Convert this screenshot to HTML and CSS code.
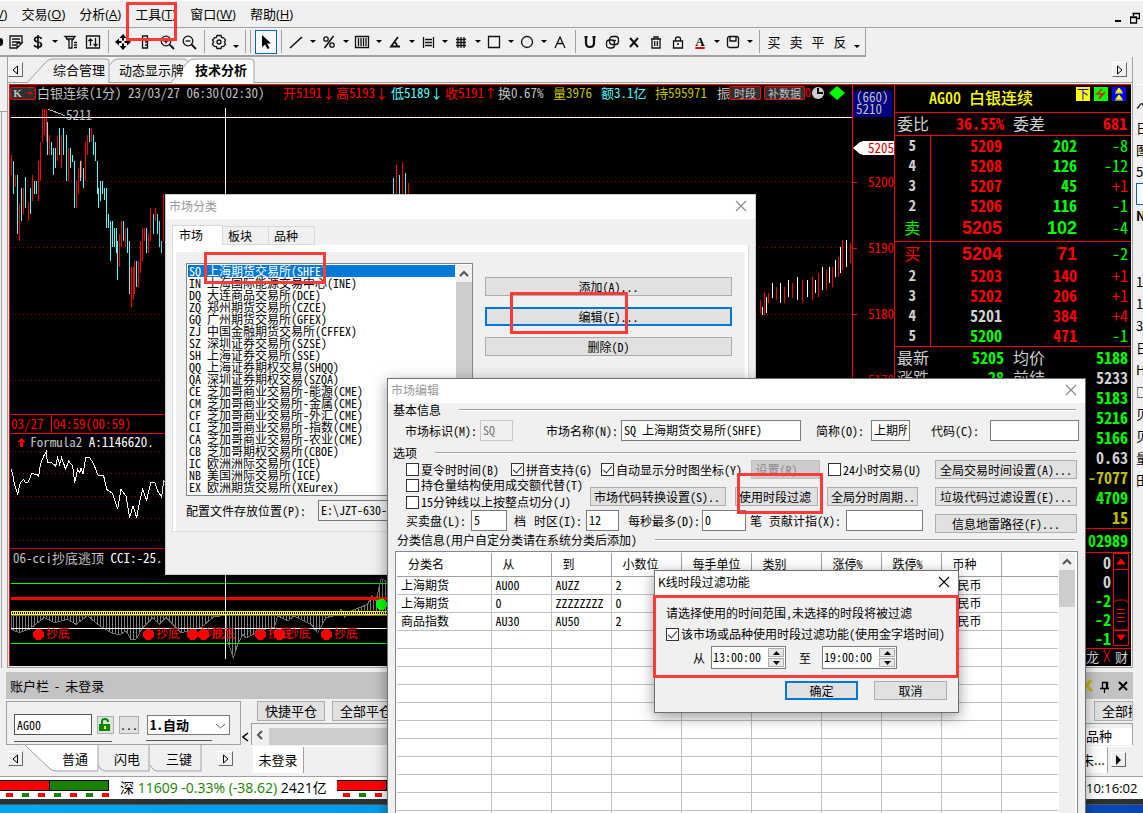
FILE: index.html
```html
<!DOCTYPE html>
<html lang="zh-CN">
<head>
<meta charset="utf-8">
<title>技术分析 - 白银连续</title>
<link rel="stylesheet" href="styles.css">
</head>
<body>
<div class="desktop">
  <nav class="menubar">
    <button class="menu menu-cut">(<u>V</u>)</button>
    <button class="menu">交易(<u>O</u>)</button>
    <button class="menu">分析(<u>A</u>)</button>
    <button class="menu menu-tools">工具(<u>T</u>)</button>
    <button class="menu">窗口(<u>W</u>)</button>
    <button class="menu">帮助(<u>H</u>)</button>
    <div class="mdi">
      <button class="mdi-btn" aria-label="最小化"><svg width="10" height="12"><path d="M1 9h6" stroke="#000" stroke-width="2"/></svg></button>
      <button class="mdi-btn" aria-label="还原"><svg width="10" height="12"><path d="M3.500 4V1.500h6v5H7M2.500 1.500h7M.5 5h6v6h-6zM.5 5.500h6" fill="none" stroke="#000" stroke-width="1.300"/></svg></button>
    </div>
  </nav>

  <div class="toolbar">
    <span class="stub"></span>
    <button class="tool" aria-label="文档"><svg viewBox="0 0 16 16"><path d="M14 9V2H2v12h7M4 5h8M4 8h8M4 11h4M9 14l5-5H9z"/></svg></button>
    <button class="tool" aria-label="资金"><svg viewBox="0 0 16 16"><path stroke-width="1.700" d="M11.500 5Q11 3 8 3T4.600 5.300Q4.800 7.500 8 8t3.500 2.600Q11.300 13 8 13T4.300 11M8 1v14"/></svg></button><i class="caret"></i>
    <button class="tool" aria-label="筛选"><svg viewBox="0 0 16 16"><path d="M2 2.500h10L9 6.500V14H6V6.500zM3 5h8M11 8.500h3M11 11h3M11 13.500h3"/></svg></button>
    <button class="tool" aria-label="升降"><svg viewBox="0 0 16 16"><path d="M1.500 2h13v12h-13zM5.500 12V5M3.500 7l2-2 2 2M10.500 4v8M8.500 10l2 2 2-2"/></svg></button>
    <i class="sep"></i>
    <button class="tool" aria-label="移动"><svg viewBox="0 0 16 16"><path fill="#000" stroke="none" d="M8 0l3.500 4H9v2.500H7V4H4.500zM8 16l3.500-4H9V9.500H7V12H4.500zM0 8l4-3.500V7h2.500v2H4v2.500zM16 8l-4-3.500V7H9.500v2H12v2.500z"/></svg></button>
    <button class="tool" aria-label="测量"><svg viewBox="0 0 16 16"><path d="M5.500 2h5v12h-5zM8 5h2M8 8h2M8 11h2"/></svg></button>
    <button class="tool" aria-label="放大"><svg viewBox="0 0 16 16"><circle cx="7" cy="7" r="4.800"/><path d="M10.500 10.500L15 15" stroke-width="1.800"/><path d="M4.500 7h5M7 4.500v5"/></svg></button>
    <button class="tool" aria-label="缩小"><svg viewBox="0 0 16 16"><circle cx="7" cy="7" r="4.800"/><path d="M10.500 10.500L15 15" stroke-width="1.800"/><path d="M4.500 7h5"/></svg></button>
    <i class="sep"></i>
    <button class="tool" aria-label="设置"><svg viewBox="0 0 16 16"><path d="M6 1.500h4l.6 2 2 .4 1.900 2.100-1 2 1 2.100-1.900 2.200-2 .3L10 14.500H6l-.6-1.900-2-.3-1.900-2.200 1-2.100-1-2 1.900-2.100 2-.4z"/><circle cx="8" cy="8" r="2"/></svg></button><i class="caret low"></i>
    <i class="grip"></i>
    <button class="tool on" aria-label="选择"><svg viewBox="0 0 16 16"><path fill="#000" stroke="none" d="M4 1v12l3-2.500L9.500 15l2-1L9 9.500h4z"/></svg></button>
    <i class="sep"></i>
    <button class="tool" aria-label="直线"><svg viewBox="0 0 16 16"><path stroke-width="1.600" d="M2 14L14 3"/></svg></button><i class="caret"></i>
    <button class="tool" aria-label="百分比"><svg viewBox="0 0 16 16"><circle cx="5" cy="5" r="2.200"/><circle cx="11" cy="11" r="2.200"/><path stroke-width="1.600" d="M3.500 14l9-12"/></svg></button><i class="caret"></i>
    <button class="tool" aria-label="周期线"><svg viewBox="0 0 16 16"><path d="M1.500 2.500h13v11h-13zM4.500 4v8M7 4v8M9.500 4v8M12 4v8"/></svg></button><i class="caret"></i>
    <button class="tool" aria-label="角度"><svg viewBox="0 0 16 16"><path stroke-width="1.800" d="M11 3L4 12.500h9M7 8q3 1 3 5"/></svg></button><i class="caret"></i>
    <button class="tool" aria-label="刻度"><svg viewBox="0 0 16 16"><path d="M3.500 3v11M13.500 3v11M5 5.500h7M5 8.500h7M5 11.500h7"/></svg></button><i class="caret"></i>
    <button class="tool" aria-label="网格"><svg viewBox="0 0 16 16"><path d="M5 3v11M8 3v11M11 3v11M3 5.500h10M3 8.500h10M3 11.500h10"/></svg></button><i class="caret"></i>
    <button class="tool" aria-label="矩形"><svg viewBox="0 0 16 16"><path d="M2.500 2.500h11v11h-11z"/></svg></button><i class="caret"></i>
    <button class="tool" aria-label="圆"><svg viewBox="0 0 16 16"><circle cx="8" cy="8" r="5.500"/></svg></button><i class="caret"></i>
    <button class="tool" aria-label="文字"><svg viewBox="0 0 16 16"><path d="M3 14L8 3l5 11M5 9.500h6"/></svg></button>
    <i class="sep"></i>
    <button class="tool" aria-label="磁吸"><svg viewBox="0 0 16 16"><path stroke-width="2.200" d="M4 3v6q0 4 4 4t4-4V3M2.500 3h3M10.500 3h3"/></svg></button>
    <button class="tool" aria-label="复制"><svg viewBox="0 0 16 16"><rect x="5.500" y="2.500" width="9" height="8" rx="3"/><rect x="2.500" y="6" width="8" height="8" rx="3"/><path d="M8 6.500h4"/></svg></button>
    <button class="tool" aria-label="删除"><svg viewBox="0 0 16 16"><path stroke-width="2" d="M4 4l8 9M12 4l-8 9"/></svg></button>
    <button class="tool" aria-label="清空"><svg viewBox="0 0 16 16"><path d="M3 5h10M6 5V3h4v2M4 5v9h8V5M6.700 7v5M9.300 7v5"/></svg></button>
    <button class="tool" aria-label="锁定"><svg viewBox="0 0 16 16"><path d="M3.500 7h9v7h-9zM5.500 7V5q0-2 2.500-2t2.500 2v2M7 10h2"/></svg></button>
    <button class="tool tool-a" aria-label="字体颜色">A</button><i class="caret"></i>
    <button class="tool" aria-label="保存"><svg viewBox="0 0 16 16"><rect x="2.500" y="2.500" width="11" height="11" rx="2"/><path d="M5 3v4h6V3"/></svg></button><i class="caret"></i>
    <i class="sep"></i>
    <button class="tool">买</button><button class="tool">卖</button><button class="tool">平</button><button class="tool">反</button><i class="caret low"></i>
  </div>

  <div class="work">
    <div class="gutter"></div>
    <main class="frame">
      <div class="strip">
        <svg class="strip-bg" width="260" height="26" fill="#f0f0f0" stroke="#a0a0a0"><path d="M19 26L36 7q4-5 8-5h54q3 0 3 3v21M102 8q3-6 8-6h64q6 0 7 5"/><path fill="#fff" d="M163 26l15-19q4-5 8-5h57q3 0 3 3v21"/></svg>
        <button class="arrow" aria-label="向左"><svg width="7" height="10"><path d="M5.500 1v8L1 5z" fill="none" stroke="#000"/></svg></button>
        <button class="tab t1">综合管理</button><button class="tab t2">动态显示牌</button><button class="tab t3">技术分析</button>
        <button class="arrow end" aria-label="向右"><svg width="7" height="10"><path d="M1.500 1v8L6 5z" fill="none" stroke="#000"/></svg></button>
      </div>
      <div class="terminal">
        <section class="charts">
          <header class="ticker">
            <button class="kbtn"><b>K</b><i></i></button>
            <span>白银连续(1分) 23/03/27 06:30(02:30)</span>
            <span class="r">开5191↓</span><span class="r">高5193↓</span><span class="c">低5189↓</span><span class="r">收5191↑</span>
            <span>换0.67%</span><span class="y">量3976</span><span class="c">额3.1亿</span><span class="y">持595971</span><span>振</span>
            <button class="pill">时段</button><button class="pill wide">补数据</button>
            <svg width="44" height="16"><text x="0" y="12" fill="red" font-size="12">0</text><circle cx="13" cy="8" r="6" fill="#d0d0d0"/><path d="M13 3v5h5" stroke="#000" fill="none" stroke-width="2"/><path d="M24 8l8-7 8 7-8 7z" fill="#0f0"/></svg>
          </header>
          <svg class="plot" viewBox="27 42 2529 930" width="843" height="310" fill="none" stroke-width="3">
            <path stroke="#a00000" stroke-dasharray="3 9" d="M30 76.500H2556M30 274.500H2556M30 472.500H2556M30 673.500H2556M30 871.500H2556"/>
            <path stroke="#f00" d="M31 195V255M44 255V290M55 338V453M68 294V372M82 335V392M95 255V332M113 213V333M119 156V273M125 57V156M131 57V135M137 57V156M146 135V195M170 135V213M182 135V235M203 174V273M227 273V353M233 234V312M242 213V265M254 156V273M260 135V195M272 115V156M356 432V530M362 392V470M374 413V470M392 530V650M398 530V630M401 513V612M413 513V590M419 453V550M425 413V513M431 413V453M443 432V490M449 353V453M464 353V392M488 312V453M1185 225V320M1203 215V320M1221 280V320M2277 630V670M2289 610V675M2301 610V640M2325 590V630M2349 590V640M2373 580V625M2403 570V640M2433 560V630M2451 550V620M2475 540V600M2493 530V590M2511 500V560M2523 450V540M2547 460V520"/>
            <path stroke="#54fcfc" d="M38 213V312M49 255V432M62 294V392M74 262V355M89 294V372M101 273V312M107 273V312M139 96V195M152 156V195M158 174V255M164 174V235M176 115V195M188 115V195M197 135V273M209 174V235M215 195V215M221 213V353M239 213V273M248 234V294M266 115V156M278 135V195M284 156V213M290 213V312M293 294V353M299 273V332M305 273V312M311 294V330M317 294V413M323 372V413M329 392V513M335 392V470M341 413V470M347 413V490M350 453V570M368 392V453M380 413V490M386 453V612M407 513V590M437 413V490M458 372V432M470 372V432M476 392V470M482 453V490M1176 265V320M1194 255V320M1212 250V320"/>
            <path stroke="#fff" d="M2283 650V675M2295 620V670M2313 580V625M2337 580V640M2361 570V620M2388 560V630M2418 570V620M2442 570V610M2463 530V600M2484 530V580M2502 510V560M2517 470V550M2535 450V530"/>
            <path stroke="#fff" d="M30 82.500H2556M673.500 54V972"/>
            <path stroke="#bbb" d="M140 57L192 77"/>
            <text x="195" y="90" class="lbl" fill="#c0c0c0">5211</text>
          </svg>
          <div class="times"><span>03/27</span><span>04:59(00:59)</span></div>
          <svg class="plot" viewBox="27 69 2529 345" width="843" height="115" fill="none" stroke-width="3">
            <path stroke="#a00000" stroke-dasharray="3 9" d="M30 121.500H2556M30 187.500H2556M30 256.500H2556M30 322.500H2556M30 388.500H2556"/>
            <path fill="#f00" d="M50 93l12-12 12 12h-8v15h-8V93z"/>
            <text x="88" y="108" class="lbl" fill="#c0c0c0">Formula2 <tspan fill="#fff">A:1146620.</tspan></text>
            <path stroke="#fff" d="M30 175L35 190 40 220 50 250 58 215 68 205 73 215 82 213 92 188 108 190 113 195 118 160 128 135 136 122 139 153 152 155 164 165 170 140 176 160 182 140 194 175 203 150 215 165 221 215 230 175 236 185 240 172 246 188 254 140 266 140 278 158 290 192 308 195 317 235 335 248 350 295 360 235 375 255 386 320 396 285 407 320 413 285 425 235 437 268 449 215 462 215 470 240 482 258 488 210 495 215"/>
            <path stroke="#d00" d="M27 412.500H2556"/>
          </svg>
          <svg class="plot" viewBox="27 414 2529 351" width="843" height="117" fill="none" stroke-width="3">
            <defs><pattern id="bars" width="9" height="9" patternUnits="userSpaceOnUse"><path d="M0 0h3v9H0z" fill="#808080"/></pattern></defs>
            <text x="36" y="456" class="lbl" fill="#c0c0c0">06-cci抄底逃顶 <tspan fill="#fff">CCI:-25.</tspan></text>
            <path fill="url(#bars)" stroke="#707070" d="M30 612V655L55 665 85 655 110 635 130 620 160 635 200 625 225 640 260 614 290 640 330 665 355 672 375 660 390 685 405 685 425 650 455 620 475 640 495 620 540 665 600 650 640 616 675 614 680 690 697 742 710 700 725 670 735 680 790 655 820 650 830 614 860 630 880 615 930 640 950 665 975 620 1010 612 1020 595 1030 618 1050 600 1100 580 1112 555 1125 570 1140 503 1165 515V612z"/>
            <g fill="#0f0"><rect x="30" y="516" width="2526" height="3"/><rect x="30" y="696" width="2526" height="3"/></g>
            <path stroke="#f00" stroke-width="9" d="M30 562.500H2556"/>
            <path stroke="#ff0" stroke-width="12" d="M30 606H2556"/><path stroke="#000" stroke-width="6" stroke-dasharray="3 3" d="M33 606H2556"/>
            <path stroke="#fff" d="M30 652.500H2556M673.500 480V745"/>
            <g fill="#f00"><circle cx="113" cy="670" r="17"/><circle cx="443" cy="670" r="17"/><circle cx="575" cy="670" r="17"/><circle cx="608" cy="670" r="17"/><circle cx="778" cy="670" r="17"/><circle cx="835" cy="670" r="17"/><circle cx="977" cy="670" r="17"/>
            <g class="mark"><text x="135" y="682">抄底</text><text x="465" y="682">抄底</text><text x="597" y="682">抄底</text><text x="630" y="682">抄底</text><text x="800" y="682">抄底</text><text x="857" y="682">抄底</text><text x="999" y="682">抄底</text></g></g>
            <circle cx="1141" cy="580" r="17" fill="#0f0"/>
          </svg>
        </section>
        <aside class="axis">
          <div class="cursor"><span>(660)</span><span>5210</span></div>
          <div class="now"><svg width="10" height="14"><path d="M0 7l7-6 3-1v14l-3-1z" fill="#fff"/></svg><b>5205</b></div>
          <div class="ticks"><span>5200</span><span>5190</span><span>5180</span><span>5170</span></div>
        </aside>
        <aside class="quote">
          <div class="q-head"><b>AG00 白银连续</b><span class="badges"><i class="bd by">下</i><i class="bd bg"><svg width="12" height="12"><path d="M7 1L2 6h5l-3 5M10 4L5 10" fill="none" stroke="#d02000" stroke-width="1.500"/></svg></i><i class="bd bb"><svg width="12" height="14"><path d="M6 1l3 4H3zM2 6h8M6 8l3 4H3zM2 13h8" fill="#ff0" stroke="#ff0"/></svg></i></span></div>
          <div class="q-ratio"><span>委比</span><b>36.55%</b><span>委差</span><b>681</b></div>
          <table class="depth">
            <tr><th>5</th><td class="r">5209</td><td class="g">202</td><td class="g">-8</td></tr>
            <tr><th>4</th><td class="r">5208</td><td class="g">126</td><td class="g">-12</td></tr>
            <tr><th>3</th><td class="r">5207</td><td class="g">45</td><td class="r">+1</td></tr>
            <tr><th>2</th><td class="r">5206</td><td class="g">116</td><td class="g">-1</td></tr>
            <tr class="best"><th class="g">卖</th><td class="r">5205</td><td class="g">102</td><td class="g">-4</td></tr>
            <tr class="best buy"><th class="r">买</th><td class="r">5204</td><td class="r">71</td><td class="g">-2</td></tr>
            <tr><th>2</th><td class="r">5203</td><td class="r">140</td><td class="r">+1</td></tr>
            <tr><th>3</th><td class="r">5202</td><td class="r">206</td><td class="r">+1</td></tr>
            <tr><th>4</th><td>5201</td><td class="r">384</td><td class="r">+4</td></tr>
            <tr><th>5</th><td class="g">5200</td><td class="r">471</td><td class="g">-1</td></tr>
          </table>
          <div class="stats">
            <span>最新</span><b class="g">5205</b><span>均价</span><b class="g">5188</b>
            <span>涨跌</span><b class="g">28</b><span>前结</span><b>5233</b>
            <b class="last g">5183</b><b class="last g">5216</b><b class="last g">5166</b><b class="last">0.63</b><b class="last y">-7077</b><b class="last g">4709</b><b class="last y">15</b>
          </div>
          <div class="total g"><b>02989</b></div>
          <div class="mini">
            <div class="mini-n"><b>0</b><b>0</b><b class="g">-2</b><b class="g">-2</b><b class="g">-1</b></div>
            <svg width="17" height="93" fill="none" stroke="#f00"><path d="M.5.5h15v92H.5zM.5 16.500h15M.5 77.500h15M.5 52q0-5 5-5h5q5 0 5 5v20q0 5-5 5h-5q-5 0-5-5zM4 56.500h8M4 60.500h8M4 64.500h8M4 68.500h8"/><path fill="#f00" d="M8 6l4 5H4zM8 87l4-5H4z"/></svg>
          </div>
          <div class="q-tabs"><span>龙</span><svg width="8" height="14"><path d="M1 1l6 12M7 1L1 13" stroke="#f00"/></svg><span>财</span></div>
        </aside>
      </div>
    </main>
    <div class="rail"><span>へ</span><span>日</span><span>图</span><span>5</span><i></i><b>N</b><span class="skip">1</span><span>1</span><span>3</span><span>日</span><span>H</span><span>□</span><span>贝</span><span>贝</span><span>量</span><span>田</span></div>
  </div>

  <div class="account"><span>账户栏 &nbsp;- &nbsp;未登录</span>
    <svg width="52" height="14" fill="none" stroke="#000"><path stroke="#c8b400" stroke-width="3" d="M1 3l10 9M10 1L1 12"/><path stroke-width="1.300" d="M19 9.500h9M21.500 9V3.500h5V9M25.500 3v6M23.500 10v4"/><path stroke-width="2" d="M38 3l8 8M46 3l-8 8"/></svg>
  </div>

  <div class="trade">
    <div class="order">
      <div class="order-box">
        <input class="code" aria-label="合约" value="AG00">
        <button class="sq" aria-label="锁"><svg width="12" height="14"><path d="M3 7V3q0-2 3-2t3 3" fill="none" stroke="#080" stroke-width="2"/><path d="M0 6h11v7H0z" fill="#080"/><path d="M5 8h2v3H5z" fill="#ff0"/></svg></button>
        <button class="sq dots">...</button>
        <span class="pick"><select class="auto" aria-label="方式"><option>1.自动</option></select><svg width="9" height="6"><path d="M0 1l4.500 4L9 1" fill="none" stroke="#555"/></svg></span>
      </div>
      <div class="order-tabs">
        <svg class="ot-bg" width="200" height="27" fill="#f0f0f0" stroke="#a0a0a0"><path fill="#fff" d="M19 0l24 23q3 3 7 3h41q1 0 1-1V0"/><path d="M92 20q3 6 7 6h44V0M144 20q3 6 7 6h44V0"/></svg>
        <button class="arrow" aria-label="向左"><svg width="7" height="10"><path d="M5.500 1v8L1 5z" fill="none" stroke="#000"/></svg></button>
        <button class="tab">普通</button><button class="tab">闪电</button><button class="tab">三键</button>
        <button class="arrow" aria-label="向右"><svg width="7" height="10"><path d="M1.500 1v8L6 5z" fill="none" stroke="#000"/></svg></button>
      </div>
    </div>
    <span class="fold"><svg width="7" height="10"><path d="M6 1L1 5l5 4" fill="none" stroke="#000" stroke-width="1.500"/></svg></span>
    <div class="positions">
      <div class="acts"><button>快捷平仓</button><button>全部平仓</button><button class="far">全部撤单</button></div>
      <div class="hscroll"><svg width="17" height="14"><path d="M10 3L6 7l4 4" fill="none" stroke="#555" stroke-width="2"/></svg><i></i><span>品种</span></div>
      <div class="pos-tabs"><button class="pos-on">未登录</button><button class="pos-on more">未...</button><button class="arrow" aria-label="更多"><svg width="7" height="10"><path d="M1 0v10L6 5z"/></svg></button></div>
    </div>
  </div>

  <footer class="status">
    <div class="meter"><div class="bar"><i></i><i class="up"></i></div><div class="ticks2"></div></div>
    <span class="idx">深 <em>11609 -0.33% (-38.62)</em> 2421亿</span>
    <div class="meter m2"><div class="bar"><i></i></div><div class="ticks3"></div></div>
    <time>10:16:02</time>
  </footer>
  <div class="edge"></div>
  <div class="wall"></div>

  <i class="note n-tools"></i>

  <section class="win w-class">
    <header><h2>市场分类</h2><button class="close" aria-label="关闭"><svg width="12" height="12"><path d="M1 1l10 10M11 1L1 11"/></svg></button></header>
    <div class="wtabs"><button class="cur">市场</button><button>板块</button><button>品种</button></div>
    <div class="sheet"><div class="sheet-in">
      <div class="pair">
        <div class="listbox">
          <ul role="listbox" aria-label="市场">
            <li role="option" class="sel">SQ 上海期货交易所(SHFE)</li><li role="option">IN 上海国际能源交易中心(INE)</li><li role="option">DQ 大连商品交易所(DCE)</li><li role="option">ZQ 郑州期货交易所(CZCE)</li><li role="option">GQ 广州期货交易所(GFEX)</li><li role="option">ZJ 中国金融期货交易所(CFFEX)</li><li role="option">SZ 深圳证券交易所(SZSE)</li><li role="option">SH 上海证券交易所(SSE)</li><li role="option">QQ 上海证券期权交易(SHQQ)</li><li role="option">QA 深圳证券期权交易(SZQA)</li><li role="option">CE 芝加哥商业交易所-能源(CME)</li><li role="option">CM 芝加哥商业交易所-金属(CME)</li><li role="option">CF 芝加哥商业交易所-外汇(CME)</li><li role="option">CI 芝加哥商业交易所-指数(CME)</li><li role="option">CA 芝加哥商业交易所-农业(CME)</li><li role="option">CB 芝加哥期权交易所(CBOE)</li><li role="option">IC 欧洲洲际交易所(ICE)</li><li role="option">NB 美国洲际交易所(ICE)</li><li role="option">EX 欧洲期货交易所(XEurex)</li>
          </ul>
          <div class="vscroll"><svg width="16" height="17"><path d="M4 11l4-4 4 4"/></svg><i class="full"></i></div>
        </div>
        <div class="cmds"><button class="btn">添加(A)...</button><button class="btn focus">编辑(E)...</button><button class="btn">删除(D)</button></div>
      </div>
      <div class="path"><label for="cfg">配置文件存放位置(P):</label><input id="cfg" class="box" readonly value="E:\JZT-630-"></div>
    </div></div>
    <i class="note n-shfe"></i><i class="note n-edit"></i>
  </section>

  <section class="win w-edit">
    <header><h2>市场编辑</h2><button class="close" aria-label="关闭"><svg width="12" height="12"><path d="M1 1l10 10M11 1L1 11"/></svg></button></header>
    <div class="legend"><span>基本信息</span><i></i></div>
    <div class="base">
      <label for="f1">市场标识(M):</label><input id="f1" class="box" disabled value="SQ">
      <label for="f2">市场名称(N):</label><input id="f2" class="box" value="SQ 上海期货交易所(SHFE)">
      <label for="f3">简称(O):</label><input id="f3" class="box" value="上期所">
      <label for="f4">代码(C):</label><input id="f4" class="box">
    </div>
    <div class="legend"><span>选项</span><i></i></div>
    <div class="opts">
      <div class="opts-l">
        <div class="o-row flags">
          <label class="cb"><input type="checkbox">夏令时时间(B)</label><label class="cb"><input type="checkbox" checked>拼音支持(G)</label><label class="cb"><input type="checkbox" checked>自动显示分时图坐标(Y)</label><button class="btn" disabled>设置(R)...</button><label class="cb"><input type="checkbox">24小时交易(U)</label>
        </div>
        <div class="o-row tools">
          <div class="two"><label class="cb"><input type="checkbox">持仓量结构使用成交额代替(T)</label><label class="cb"><input type="checkbox">15分钟线以上按整点切分(J)</label></div>
          <button class="btn">市场代码转换设置(S)..</button><button class="btn">使用时段过滤</button><button class="btn">全局分时周期..</button>
        </div>
        <div class="o-row nums">
          <label for="g1">买卖盘(L):</label><input id="g1" class="box" value="5"><span>档</span>
          <label for="g2">时区(I):</label><input id="g2" class="box" value="12">
          <label for="g3">每秒最多(D):</label><input id="g3" class="box" value="0"><span>笔</span>
          <label for="g4">贡献计指(X):</label><input id="g4" class="box">
        </div>
      </div>
      <div class="opts-r"><button class="btn">全局交易时间设置(A)...</button><button class="btn">垃圾代码过滤设置(E)...</button><button class="btn">信息地雷路径(F)...</button></div>
    </div>
    <div class="legend cat"><span>分类信息(用户自定分类请在系统分类后添加)</span><i></i></div>
    <div class="gridbox">
      <table class="cats">
        <colgroup><col class="k95"><col class="k60"><col class="k60"><col class="k70"><col class="k70"><col class="k70"><col class="k60"><col class="k60"><col class="k60"><col></colgroup>
        <thead><tr><th>分类名</th><th>从</th><th>到</th><th>小数位</th><th>每手单位</th><th>类别</th><th>涨停%</th><th>跌停%</th><th>币种</th><th></th></tr></thead>
        <tbody>
          <tr><td>上海期货</td><td>AU00</td><td>AUZZ</td><td>2</td><td></td><td></td><td></td><td></td><td>人民币</td><td></td></tr>
          <tr><td>上海期货</td><td>0</td><td>ZZZZZZZZ</td><td>0</td><td></td><td></td><td></td><td></td><td>人民币</td><td></td></tr>
          <tr><td>商品指数</td><td>AU30</td><td>AU50</td><td>2</td><td></td><td></td><td></td><td></td><td>人民币</td><td></td></tr>
          <tr><td></td><td></td><td></td><td></td><td></td><td></td><td></td><td></td><td></td><td></td></tr>
          <tr><td></td><td></td><td></td><td></td><td></td><td></td><td></td><td></td><td></td><td></td></tr>
          <tr><td></td><td></td><td></td><td></td><td></td><td></td><td></td><td></td><td></td><td></td></tr>
          <tr><td></td><td></td><td></td><td></td><td></td><td></td><td></td><td></td><td></td><td></td></tr>
          <tr><td></td><td></td><td></td><td></td><td></td><td></td><td></td><td></td><td></td><td></td></tr>
          <tr><td></td><td></td><td></td><td></td><td></td><td></td><td></td><td></td><td></td><td></td></tr>
          <tr><td></td><td></td><td></td><td></td><td></td><td></td><td></td><td></td><td></td><td></td></tr>
          <tr><td></td><td></td><td></td><td></td><td></td><td></td><td></td><td></td><td></td><td></td></tr>
          <tr><td></td><td></td><td></td><td></td><td></td><td></td><td></td><td></td><td></td><td></td></tr>
          <tr><td></td><td></td><td></td><td></td><td></td><td></td><td></td><td></td><td></td><td></td></tr>
          <tr><td></td><td></td><td></td><td></td><td></td><td></td><td></td><td></td><td></td><td></td></tr>
        </tbody>
      </table>
      <div class="vscroll"><svg width="16" height="17"><path d="M4 11l4-4 4 4"/></svg><i></i></div>
    </div>
    <i class="note n-filter"></i>
  </section>

  <section class="win w-time">
    <header><h2>K线时段过滤功能</h2><button class="close" aria-label="关闭"><svg width="12" height="12"><path d="M1 1l10 10M11 1L1 11"/></svg></button></header>
    <p>请选择使用的时间范围,未选择的时段将被过滤</p>
    <label class="cb"><input type="checkbox" checked>该市场或品种使用时段过滤功能(使用金字塔时间)</label>
    <div class="range">
      <label for="t1">从</label><span class="spin"><input id="t1" value="13:00:00"><span class="ud"><button aria-label="增加"><svg width="7" height="4"><path d="M0 4l3.500-4L7 4z"/></svg></button><button aria-label="减少"><svg width="7" height="4"><path d="M0 0l3.500 4L7 0z"/></svg></button></span></span>
      <label for="t2">至</label><span class="spin"><input id="t2" value="19:00:00"><span class="ud"><button aria-label="增加"><svg width="7" height="4"><path d="M0 4l3.500-4L7 4z"/></svg></button><button aria-label="减少"><svg width="7" height="4"><path d="M0 0l3.500 4L7 0z"/></svg></button></span></span>
    </div>
    <div class="ok"><button class="btn focus">确定</button><button class="btn">取消</button></div>
    <i class="note n-range"></i>
  </section>
</div>
</body>
</html>
```

FILE: styles.css
```css
* { box-sizing: border-box; }
body { margin: 0; font: 13px/16px "Noto Sans CJK SC", sans-serif; color: #000; }
button, input, select { font: inherit; color: inherit; margin: 0; padding: 0; border: 0; background: none; border-radius: 0; outline: 0; }
button { white-space: nowrap; }
svg { display: block; flex: none; }
i { font-style: normal; }
.desktop { position: relative; height: 100vh; overflow: hidden; display: flex; flex-direction: column; background: #f0f0f0; }
.r { color: #f00; } .g { color: #0f0; } .y { color: #c0c000; } .c { color: #54fcfc; }

/* menu and toolbar */
.menubar { display: flex; align-items: center; height: 28px; flex: none; border-top: 1px solid #fff; border-bottom: 1px solid #a0a0a0; gap: 14px; overflow: hidden; }
.menu { font-family: "Open Sans", "Noto Sans CJK SC", sans-serif; font-size: 13px; }
.menu-cut { margin-left: -8px; }
.menu-tools { width: 41px; overflow: hidden; text-align: left; }
.mdi { margin-left: auto; display: flex; gap: 6px; padding: 8px 3px 0 0; }
.toolbar { display: flex; align-items: center; height: 29px; flex: none; width: 866px; border-right: 1px solid #a0a0a0; border-bottom: 2px solid #a0a0a0; }
.stub { width: 3px; height: 8px; background: #000; border-radius: 0 4px 4px 0; margin-right: 2px; }
.tool { width: 22px; height: 24px; flex: none; display: flex; align-items: center; justify-content: center; }
.tool svg { width: 16px; height: 16px; fill: none; stroke: #111; stroke-width: 1.3; }
.tool.on { border: 1px solid #0067c0; background: #f7f7f7; }
.tool-a { font: bold 13px/12px "Liberation Serif", serif; text-decoration: underline #e00 2px; }
.caret { width: 11px; flex: none; display: flex; justify-content: center; }
.caret::after { content: ""; border: 3px solid transparent; border-top-color: #000; border-bottom: 0; }
.caret.low { padding-top: 10px; }
.sep { width: 8px; height: 23px; flex: none; background: linear-gradient(#a0a0a0, #a0a0a0) 4px 0 / 1px 100% no-repeat; }
.grip { width: 14px; height: 23px; flex: none; background: linear-gradient(#a0a0a0, #a0a0a0) 4px 0 / 1px 100% no-repeat, linear-gradient(#a0a0a0, #a0a0a0) 9px 0 / 1px 100% no-repeat; }

/* chart workspace */
.work { display: flex; flex: 1 1 auto; min-height: 0; }
.gutter { width: 7px; flex: none; margin-top: 54px; border-top: 1px solid #a0a0a0; background: linear-gradient(#a0a0a0, #a0a0a0) 1px 0 / 1px 100% no-repeat; }
.frame { flex: 1; min-width: 0; border: 1px solid #a0a0a0; border-top: 0; display: flex; flex-direction: column; }
.strip { position: relative; display: flex; align-items: center; height: 26px; flex: none; border-bottom: 1px solid #a0a0a0; }
.strip-bg { position: absolute; left: 0; top: 0; }
.arrow { position: relative; width: 15px; height: 15px; flex: none; display: flex; align-items: center; justify-content: center; border: 1px solid #fff; border-right-color: #696969; border-bottom-color: #696969; }
.strip .tab { position: relative; text-align: left; overflow: hidden; font-size: 13px; }
.t1 { width: 66px; margin-left: 30px; } .t2 { width: 64px; } .t3 { margin-left: 12px; font-weight: 700; }
.strip .end { margin-left: auto; margin-right: 5px; }
.terminal { flex: 1; min-height: 0; display: flex; margin: 1px; background: #000; border-top: 1px solid #f00; border-left: 1px solid #f00; color: #c0c0c0; font-feature-settings: "hwid"; overflow: hidden; }
.charts { flex: 1; min-width: 0; overflow: hidden; }
.ticker { display: grid; grid-template-columns: 27px 246px 53px 55px 54px 53px 55px 48px 54px 62px 12px 32px 44px 44px; align-items: center; height: 19px; padding-bottom: 3px; white-space: pre; font-size: 13px; }
.kbtn { width: 26px; height: 13px; background: #303030; border: 1px solid #f00; border-radius: 2px; display: flex; align-items: center; justify-content: space-around; font: 11px/11px "Liberation Serif", serif; }
.kbtn i { border: 3px solid transparent; border-top-color: #f00; border-bottom: 0; }
.pill { height: 14px; background: #303030; border: 1px solid #f00; border-radius: 2px; font-size: 11px; line-height: 11px; }
.pill.wide { margin-left: 3px; }
.plot { overflow: hidden; shape-rendering: crispEdges; }
.lbl { font-size: 39px; stroke: none; }
.mark { font-size: 36px; stroke: none; }
.times { display: flex; height: 20px; border: 1px solid #f00; border-width: 1px 0; color: #f00; line-height: 17px; }
.times span { width: 42px; padding-left: 1px; border-right: 1px solid #f00; }
.times span + span { width: auto; border: 0; }
.axis { width: 43px; flex: none; border: 1px solid #f00; border-width: 0 1px; color: #f00; padding-top: 6px; }
.cursor { width: 39px; height: 26px; background: #000080; color: #c0c0c0; display: flex; flex-direction: column; line-height: 12px; padding-left: 3px; }
.now { display: flex; margin-top: 24px; height: 14px; line-height: 14px; }
.now b { flex: 1; background: #fff; color: #d00000; font-weight: 400; text-align: right; }
.ticks { display: flex; flex-direction: column; gap: 51px; padding-top: 19px; text-align: right; line-height: 16px; }
.ticks span { height: 15px; background: linear-gradient(#f00, #f00) 0 8px / 4px 1px no-repeat; }

/* quote panel */
.quote { width: 236px; flex: none; font-size: 16px; line-height: 20px; display: flex; flex-direction: column; color: #d0d0d0; }
.q-head { display: flex; justify-content: space-between; height: 28px; padding: 2px 5px 0 34px; border-bottom: 1px solid #f00; color: #ff0; }
.q-head b { font-weight: 500; font-size: 16px; line-height: 20px; }
.badges { display: flex; gap: 4px; }
.bd { width: 14px; height: 14px; display: flex; align-items: center; justify-content: center; font-size: 12px; }
.by { background: #ff0; color: #00f; } .bg { background: #0f0; } .bb { background: #00f; }
.q-ratio { display: grid; grid-template-columns: 34px 73px 42px 1fr; height: 23px; line-height: 20px; padding: 0 4px 0 2px; border-bottom: 1px solid #f00; }
.q-ratio b { color: #f00; text-align: right; } .q-ratio span:nth-child(3) { padding-left: 9px; }
.depth { border-collapse: collapse; width: 100%; table-layout: fixed; }
.depth th, .depth td { height: 20px; padding: 0 0 2px; text-align: right; font-weight: 700; line-height: 18px; }
.depth th { width: 35px; text-align: center; border-right: 1px solid #f00; font-size: 15px; }
.depth td:nth-child(2) { width: 72px; } .depth td:nth-child(3) { width: 75px; }
.depth td:nth-child(4) { font-weight: 400; padding-right: 3px; }
.depth .best th { font-weight: 400; height: 25px; font-size: 16px; }
.depth .best td:nth-child(2), .depth .best td:nth-child(3) { font: bold 18px/20px "Liberation Sans", sans-serif; padding-bottom: 0; }
.depth .buy { border-top: 1px solid #f00; }
.stats { border-top: 1px solid #f00; display: grid; grid-template-columns: 34px 73px 42px 1fr; padding: 0 3px 1px 2px; line-height: 20px; grid-auto-rows: 20px; }
.stats b { text-align: right; } .stats span:nth-child(4n+3) { padding-left: 9px; }
.stats .last { grid-column: 4; }
.total { border: 1px solid #f00; border-width: 1px 0; height: 25px; line-height: 22px; text-align: right; padding-right: 3px; }
.mini { display: flex; justify-content: flex-end; gap: 2px; padding-right: 1px; }
.mini-n { display: flex; flex-direction: column; line-height: 19px; text-align: right; }
.q-tabs { display: flex; justify-content: flex-end; gap: 4px; font-size: 13px; line-height: 15px; border-top: 1px solid #f00; padding-right: 3px; flex: 1; }

.rail { width: 10px; flex: none; overflow: hidden; margin-top: 27px; border-top: 1px solid #fff; padding: 10px 0 0 3px; display: flex; flex-direction: column; line-height: 22px; }
.rail span, .rail b { height: 22px; flex: none; white-space: nowrap; }
.rail i { height: 22px; width: 20px; flex: none; border: 1px solid #0067c0; background: #f7fbff; }
.rail .skip { margin-top: 44px; }

/* account and order area */
.account { display: flex; align-items: center; justify-content: space-between; height: 27px; flex: none; margin: 4px 10px 0 6px; padding: 0 0 0 4px; background: #c3c3c3; }
.trade { display: flex; height: 77px; flex: none; margin-right: 10px; padding-top: 2px; }
.order { width: 235px; margin-left: 6px; flex: none; }
.order-box { display: flex; align-items: center; height: 44px; border: 1px solid #a0a0a0; padding: 3px 10px 0 7px; gap: 5px; font-size: 12px; font-feature-settings: "hwid"; overflow: hidden; background: linear-gradient(#555, #555) 7px 39px / 98px 1px no-repeat, linear-gradient(#555, #555) 139px 38px / 66px 1px no-repeat; }
.code { width: 78px; height: 21px; border: 1px solid #555; background: #fff; padding-left: 2px; }
.sq { width: 18px; height: 18px; background: #e1e1e1; border: 1px solid #adadad; display: flex; align-items: center; justify-content: center; }
.dots { width: 21px; margin-right: 3px; }
.pick { position: relative; }
.pick svg { position: absolute; right: 5px; top: 8px; }
.auto { appearance: none; display: block; width: 83px; height: 20px; border: 1px solid #7a7a7a; background: #fff; font-weight: 700; font-size: 13px; line-height: 16px; padding-left: 2px; }
.order-tabs { position: relative; display: flex; align-items: center; height: 27px; padding-left: 2px; }
.ot-bg { position: absolute; left: 0; top: 0; }
.order-tabs .tab { position: relative; width: 26px; margin-right: 26px; }
.order-tabs .arrow + .tab { margin-left: 39px; }
.fold { width: 10px; padding: 31px 0 0 1px; flex: none; }
.positions { flex: 1; min-width: 0; }
.acts { display: flex; gap: 7px; padding-left: 6px; height: 22px; }
.acts button { width: 68px; height: 20px; flex: none; background: #e1e1e1; border: 1px solid #adadad; }
.acts .far { width: 39px; margin-left: auto; text-align: left; padding-left: 7px; overflow: hidden; }
.hscroll { display: flex; height: 22px; border: 1px solid #a0a0a0; border-width: 1px 1px 0; padding-top: 4px; margin-bottom: 1px; }
.hscroll i { flex: 1; background: #cdcdcd; }
.hscroll span { background: #fff; width: 46px; }
.pos-tabs { display: flex; height: 27px; padding-left: 2px; border-top: 1px solid #fff; gap: 3px; }
.pos-on { background: #fff; width: 51px; border-right: 1px solid #a0a0a0; }
.more { width: 49px; margin-left: auto; padding-left: 20px; }
.pos-tabs .arrow { margin: 5px 7px 0 0; }

.status { display: flex; align-items: center; height: 23px; flex: none; border-top: 1px solid #a0a0a0; background: #fff; font-family: "Open Sans", "Noto Sans CJK SC", sans-serif; font-size: 13px; white-space: nowrap; }
.meter { width: 109px; flex: none; }
.bar { display: flex; height: 11px; border: 1px solid #000; border-left: 0; background: red; }
.bar i { width: 50px; border-right: 1px solid #000; } .bar .up { flex: 1; background: #188200; border: 0; }
.ticks2, .ticks3 { height: 4px; margin-top: 2px; background: repeating-linear-gradient(90deg, #fff 0 6px, #f00 6px 13px, #fff 13px 22px, #188200 22px 29px, #fff 29px 32px); }
.idx { width: 228px; padding-left: 11px; font-size: 14px; } .idx em { font-style: normal; color: #188200; }
.m2 { flex: 1; }
.status time { width: 57px; }
.edge { height: 6px; flex: none; background: #2b3236; border-bottom: 1px solid #555; }
.wall { height: 8px; flex: none; background: linear-gradient(90deg, #00a8f3, #009bea 35%, #0845b5); }

/* dialogs */
.win { position: absolute; background: #f0f0f0; border: 1px solid #707070; box-shadow: 0 4px 14px rgba(0,0,0,.4); font-size: 12px; line-height: 14px; font-feature-settings: "hwid"; display: flex; flex-direction: column; }
.win header { display: flex; align-items: center; justify-content: space-between; height: 24px; flex: none; background: #fff; padding: 0 8px 2px 3px; color: #999; }
.win h2 { margin: 0; font-size: 12px; font-weight: 400; font-feature-settings: normal; }
.close svg { fill: none; stroke: #888; stroke-width: 1.1; }
.btn { height: 19px; border: 1px solid #adadad; background: #e1e1e1; line-height: 15px; flex: none; overflow: hidden; }
.btn.focus { border: 2px solid #0078d7; line-height: 13px; }
.btn:disabled { background: #ccc; border-color: #bfbfbf; color: #888; }
.box { height: 21px; border: 1px solid #7a7a7a; background: #fff; padding: 0 2px 2px; flex: none; }
.box:disabled { background: #f0f0f0; border-color: #c8c8c8; color: #777; }
.cb { display: flex; align-items: center; gap: 2px; white-space: nowrap; flex: none; }
.cb input { appearance: none; width: 13px; height: 13px; border: 1px solid #333; background: #fff; display: flex; align-items: center; justify-content: center; flex: none; }
.cb input:checked::after { content: ""; width: 4px; height: 8px; border: solid #333; border-width: 0 1px 1px 0; transform: rotate(40deg); margin-bottom: 2px; }
.note { position: absolute; border: 3px solid #ff3b38; pointer-events: none; }
.n-tools { left: 126px; top: 2px; width: 51px; height: 39px; }
.vscroll { width: 16px; flex: none; background: #f0f0f0; display: flex; flex-direction: column; }
.vscroll svg { fill: none; stroke: #555; stroke-width: 2; }
.vscroll i { height: 37px; background: #cdcdcd; } .vscroll .full { flex: 1; }

.w-class { left: 165px; top: 194px; width: 591px; height: 381px; border-color: #ccc; }
.wtabs { display: flex; align-items: flex-end; height: 26px; flex: none; padding: 0 6px; }
.wtabs button { width: 46px; height: 19px; border: 1px solid #d9d9d9; border-left-width: 0; text-align: left; padding-left: 5px; }
.wtabs .cur { width: 51px; height: 20px; background: #fff; border-left-width: 1px; border-bottom: 0; padding-left: 6px; padding-bottom: 2px; }
.sheet { margin: 0 6px; padding: 7px 3px 0; height: 287px; background: #fff; border: 1px solid #dcdcdc; border-top: 0; }
.sheet-in { background: #f0f0f0; height: 279px; padding: 11px 10px 0; }
.pair { display: flex; gap: 12px; }
.listbox { display: flex; width: 287px; height: 233px; border: 1px solid #828790; background: #fff; padding: 1px 0 1px 1px; }
.listbox ul { flex: 1; margin: 0; padding: 0; list-style: none; overflow: hidden; }
.listbox li { line-height: 11px; height: 12px; padding-left: 1px; white-space: pre; }
.listbox .sel { background: #0078d7; color: #fff; margin-right: 1px; }
.cmds { display: flex; flex-direction: column; gap: 11px; padding-top: 14px; flex: 1; margin-right: 3px; }
.path { display: flex; align-items: center; gap: 12px; padding-top: 4px; }
.path .box { flex: 1; background: #f0f0f0; }
.n-shfe { left: 38px; top: 57px; width: 122px; height: 32px; }
.n-edit { left: 344px; top: 97px; width: 118px; height: 42px; }

.w-edit { left: 387px; top: 378px; width: 699px; height: 460px; }
.legend { display: flex; align-items: center; gap: 12px; margin: 0 9px 0 5px; height: 14px; flex: none; line-height: 12px; }
.legend i { flex: 1; height: 2px; background: #a0a0a0; border-bottom: 1px solid #fff; margin-left: 6px; }
.base { display: grid; grid-template-columns: 75px 33px 33px 75px 180px 15px 55px 39px 21px 59px 1fr; align-items: center; margin: 3px 6px 5px 17px; height: 21px; line-height: 12px; }
.base input { width: 100%; }
.base label:nth-of-type(2) { grid-column: 4; } .base label:nth-of-type(3) { grid-column: 7; } .base label:nth-of-type(4) { grid-column: 10; }
.opts { display: flex; justify-content: space-between; margin: 0 8px 0 18px; flex: none; }
.opts-l { width: 520px; }
.opts-r { display: flex; flex-direction: column; gap: 8px; width: 142px; flex: none; }
.o-row { display: flex; align-items: center; }
.o-row.flags { height: 18px; display: grid; grid-template-columns: 105px 90px 150px 77px 1fr; }
.flags .btn { width: 69px; }
.o-row.tools { gap: 9px; height: 32px; align-items: flex-end; }
.two { display: flex; flex-direction: column; gap: 3px; width: 175px; height: 32px; align-self: flex-start; }
.two .cb { height: 14px; }
.tools .btn { width: 136px; margin-bottom: 4px; padding: 0 3px; text-align: left; } .tools .btn + .btn { width: 83px; } .tools .btn + .btn + .btn { width: 91px; }
.o-row.nums { height: 21px; display: grid; grid-template-columns: 65px 43px 20px 52px 42px 74px 48px 19px 77px 77px; line-height: 12px; }
.nums .box { width: 36px; } .nums #g2 { width: 33px; } .nums #g3 { width: 44px; } .nums #g4 { width: 77px; }
.cat { margin: 0 10px 0 9px; }
.gridbox { display: flex; flex: 1; margin: 4px 7px 0; border: 1px solid #828790; background: #fff; padding: 1px 2px 0 1px; min-height: 0; overflow: hidden; }
.cats { flex: 1; border-collapse: collapse; table-layout: fixed; width: 100%; align-self: flex-start; margin-right: 1px; }
.k95 { width: 94px; } .k60 { width: 60px; } .k70 { width: 70px; }
.cats th { height: 23px; font-weight: 400; text-align: left; padding: 0 0 0 11px; border-right: 1px solid #a0a0a0; border-bottom: 1px solid #a0a0a0; white-space: nowrap; background: #fff; }
.cats td { height: 18px; padding: 0 0 1px 4px; border-right: 1px solid #c0c0c0; border-bottom: 1px solid #c0c0c0; line-height: 14px; white-space: nowrap; }
.cats th:last-child, .cats td:last-child { border-right: 0; }
.n-filter { left: 349px; top: 94px; width: 86px; height: 41px; }

.w-time { left: 654px; top: 570px; width: 305px; height: 143px; }
.w-time header { color: #000; padding-left: 3px; }
.w-time .close svg { stroke: #000; }
.w-time p { margin: 11px 0 7px 11px; height: 14px; white-space: nowrap; }
.w-time > .cb { margin-left: 11px; height: 14px; }
.range { display: flex; align-items: center; margin: 5px 0 0 38px; }
.range label { width: 18px; } .range .spin + label { width: 23px; margin-left: 13px; }
.spin { display: flex; width: 75px; height: 23px; border: 1px solid #7a7a7a; background: #fff; padding: 1px; }
.spin input { flex: 1; min-width: 0; width: 50px; padding-bottom: 2px; }
.ud { width: 16px; display: flex; flex-direction: column; gap: 1px; }
.ud button { flex: 1; background: #e6e6e6; border: 1px solid #adadad; display: flex; align-items: center; justify-content: center; }
.ok { display: flex; gap: 16px; margin: 12px 11px 0 auto; }
.ok .btn { width: 73px; }
.n-range { left: -2px; top: 24px; width: 306px; height: 83px; }
```
